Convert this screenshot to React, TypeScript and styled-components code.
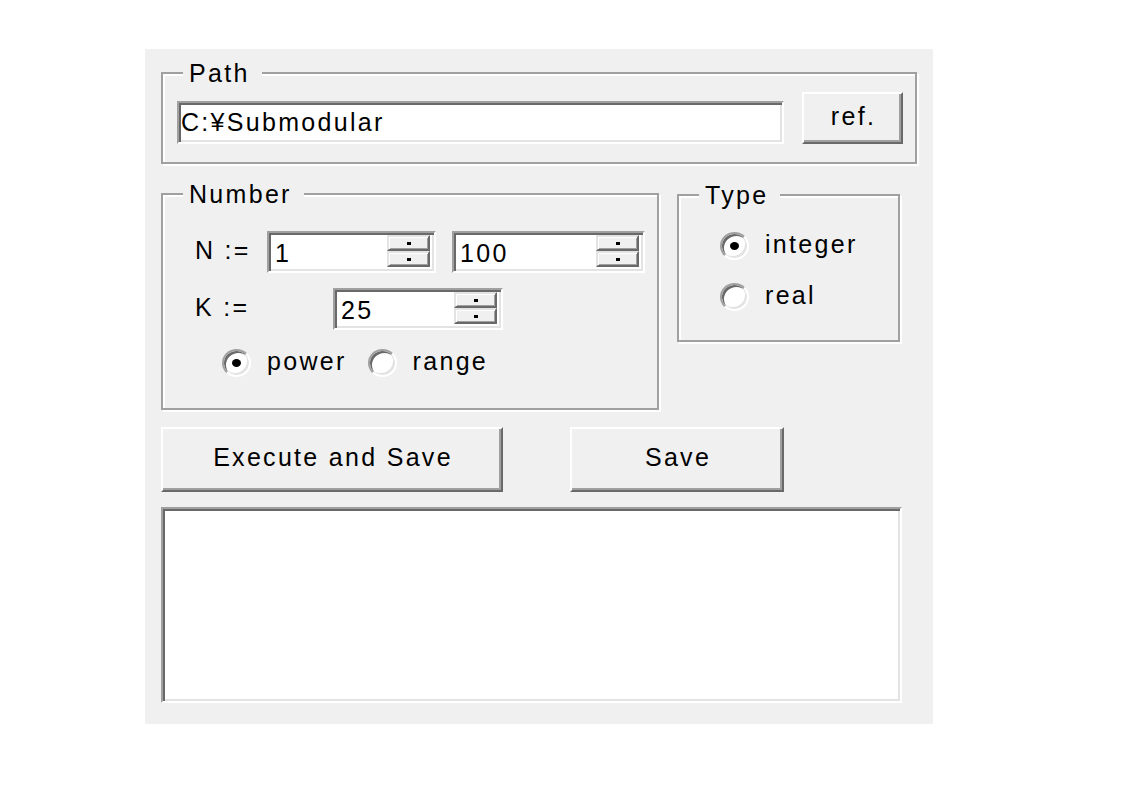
import React from "react";
import styled, { createGlobalStyle, css } from "styled-components";

const GlobalStyle = createGlobalStyle`
  html, body { margin: 0; padding: 0; background: #ffffff; }
  body { font-family: "Liberation Sans", Arial, sans-serif; }
`;

const sunken = css`
  border: 2px solid;
  border-color: #a0a0a0 #ffffff #ffffff #a0a0a0;
  box-shadow: inset 2px 2px 0 #696969, inset -2px -2px 0 #e3e3e3;
`;

const raised = css`
  border: 2px solid;
  border-color: #ffffff #696969 #696969 #ffffff;
  box-shadow: inset -2px -2px 0 #a0a0a0, inset 2px 2px 0 #f0f0f0;
`;

const Dialog = styled.div`
  box-sizing: border-box;
  width: 788px;
  height: 675px;
  margin: 49px 0 0 145px;
  padding: 23px 0 0 16px;
  background: #f0f0f0;
  display: flex;
  flex-direction: column;
  font-family: "Liberation Sans", Arial, sans-serif;
  font-size: 25px;
  letter-spacing: 2.3px;
  color: #000;
`;

const Group = styled.div<{ $w: number; $h: number; $pt: number; $pl: number; $mt?: number; $gap?: number }>`
  position: relative;
  box-sizing: border-box;
  flex-shrink: 0;
  width: ${(p) => p.$w}px;
  height: ${(p) => p.$h}px;
  margin-top: ${(p) => p.$mt ?? 0}px;
  border: 2px solid #a0a0a0;
  box-shadow: inset 2px 2px 0 #ffffff, 2px 2px 0 #ffffff;
  padding: ${(p) => p.$pt}px 0 0 ${(p) => p.$pl}px;
  display: flex;
  flex-direction: column;
  gap: ${(p) => p.$gap ?? 0}px;
`;

const PathGroup = styled(Group)`
  flex-direction: row;
  align-items: flex-end;
  padding-bottom: 18px;
  gap: 18px;
`;

const Legend = styled.span`
  position: absolute;
  top: -15px;
  left: 20px;
  padding: 0 12px 0 6px;
  line-height: 28px;
  background: #f0f0f0;
`;

const TextBox = styled.input`
  ${sunken};
  box-sizing: border-box;
  width: 607px;
  height: 43px;
  margin: 0;
  padding: 0 0 0 2px;
  background: #ffffff;
  color: #000;
  font: inherit;
  letter-spacing: inherit;
  outline: none;
`;

const Button = styled.button<{ $w: number; $h: number }>`
  ${raised};
  box-sizing: border-box;
  width: ${(p) => p.$w}px;
  height: ${(p) => p.$h}px;
  margin: 0;
  padding: 0 0 4px 2px;
  background: #f0f0f0;
  color: #000;
  font: inherit;
  letter-spacing: inherit;
  cursor: default;
`;

const MiddleRow = styled.div`
  display: flex;
  align-items: flex-start;
  gap: 18px;
  margin-top: 29px;
`;

const FieldRow = styled.div<{ $mt?: number; $h?: number; $pl?: number; $gap?: number }>`
  display: flex;
  align-items: center;
  height: ${(p) => p.$h ?? 42}px;
  margin-top: ${(p) => p.$mt ?? 0}px;
  padding-left: ${(p) => p.$pl ?? 0}px;
  gap: ${(p) => p.$gap ?? 0}px;
`;

const FieldLabel = styled.span<{ $w: number }>`
  flex-shrink: 0;
  width: ${(p) => p.$w}px;
  padding-bottom: 4px;
`;

const Spinner = styled.div<{ $w: number; $ml?: number }>`
  ${sunken};
  box-sizing: border-box;
  display: flex;
  width: ${(p) => p.$w}px;
  height: 42px;
  margin-left: ${(p) => p.$ml ?? 0}px;
  background: #ffffff;
`;

const SpinInput = styled.input`
  flex: 1;
  min-width: 0;
  border: 0;
  margin: 0;
  padding: 2px 0 0 6px;
  background: transparent;
  color: #000;
  font: inherit;
  letter-spacing: inherit;
  outline: none;
`;

const SpinButtons = styled.div`
  display: flex;
  flex-direction: column;
  width: 43px;
  margin: 2px 4px 4px 0;
`;

const SpinButton = styled.span`
  flex: 1;
  box-sizing: border-box;
  display: flex;
  align-items: center;
  justify-content: center;
  border: 2px solid;
  border-color: #e3e3e3 #696969 #696969 #e3e3e3;
  box-shadow: inset 1px 1px 0 #ffffff, inset -1px -1px 0 #a0a0a0;
  background: #f0f0f0;

  &::after {
    content: "";
    width: 4px;
    height: 3px;
    background: #000;
  }
`;

const RadioOption = styled.label`
  display: inline-flex;
  align-items: center;
  gap: 16px;
  height: 28px;
`;

const RadioCircle = styled.span<{ $checked?: boolean }>`
  box-sizing: border-box;
  flex-shrink: 0;
  width: 29px;
  height: 28px;
  border-radius: 50%;
  border: 2px solid;
  border-color: #a0a0a0 #ffffff #ffffff #a0a0a0;
  box-shadow: inset 2px 2px 0 #696969, inset -2px -2px 0 #e3e3e3;
  background: #ffffff;
  display: flex;
  align-items: center;
  justify-content: center;

  &::after {
    content: "";
    display: ${(p) => (p.$checked ? "block" : "none")};
    width: 9px;
    height: 8px;
    border-radius: 50%;
    background: #000;
  }
`;

const RadioText = styled.span`
  padding-bottom: 3px;
`;

const ButtonRow = styled.div`
  display: flex;
  gap: 67px;
  margin-top: 17px;
`;

const OutputBox = styled.textarea`
  ${sunken};
  box-sizing: border-box;
  width: 741px;
  height: 196px;
  margin: 15px 0 0 0;
  padding: 4px;
  background: #ffffff;
  resize: none;
  outline: none;
  font: inherit;
`;

function Spin({ value, w, ml }: { value: string; w: number; ml?: number }) {
  return (
    <Spinner $w={w} $ml={ml}>
      <SpinInput readOnly value={value} />
      <SpinButtons>
        <SpinButton />
        <SpinButton />
      </SpinButtons>
    </Spinner>
  );
}

function Radio({ label, checked }: { label: string; checked?: boolean }) {
  return (
    <RadioOption>
      <RadioCircle $checked={checked} />
      <RadioText>{label}</RadioText>
    </RadioOption>
  );
}

export default function App() {
  return (
    <>
      <GlobalStyle />
      <Dialog>
        <PathGroup $w={756} $h={92} $pt={0} $pl={14}>
          <Legend>Path</Legend>
          <TextBox readOnly value="C:¥Submodular" />
          <Button $w={101} $h={52}>ref.</Button>
        </PathGroup>

        <MiddleRow>
          <Group $w={498} $h={217} $pt={36} $pl={32}>
            <Legend>Number</Legend>
            <FieldRow>
              <FieldLabel $w={72}>N :=</FieldLabel>
              <Spin value="1" w={169} />
              <Spin value="100" w={193} ml={16} />
            </FieldRow>
            <FieldRow $mt={15}>
              <FieldLabel $w={138}>K :=</FieldLabel>
              <Spin value="25" w={170} />
            </FieldRow>
            <FieldRow $mt={19} $h={28} $pl={27} $gap={21}>
              <Radio label="power" checked />
              <Radio label="range" />
            </FieldRow>
          </Group>

          <Group $w={223} $h={148} $pt={36} $pl={41} $mt={1} $gap={23}>
            <Legend>Type</Legend>
            <Radio label="integer" checked />
            <Radio label="real" />
          </Group>
        </MiddleRow>

        <ButtonRow>
          <Button $w={342} $h={65}>Execute and Save</Button>
          <Button $w={214} $h={65}>Save</Button>
        </ButtonRow>

        <OutputBox readOnly value="" />
      </Dialog>
    </>
  );
}
